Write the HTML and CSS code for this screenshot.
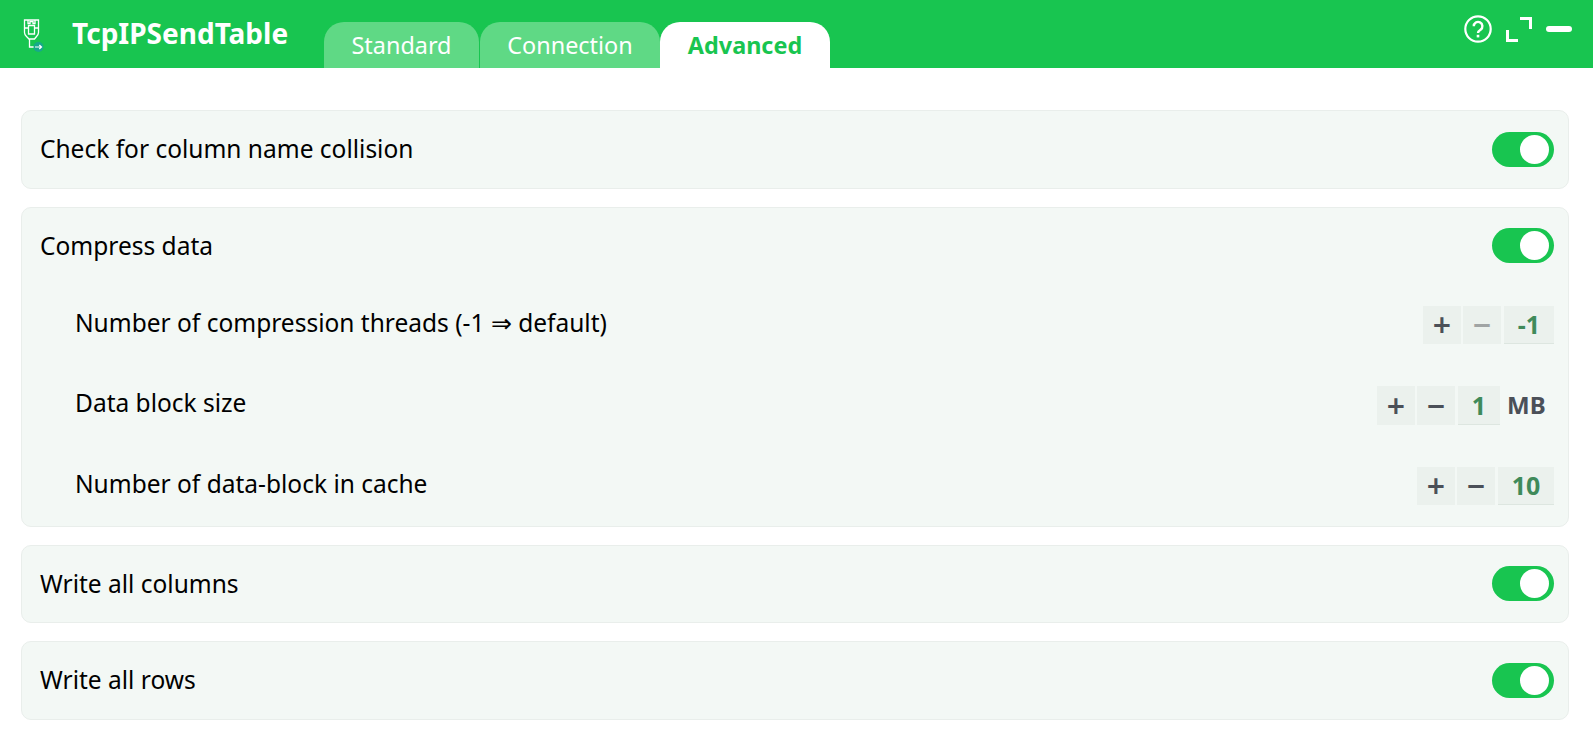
FILE: index.html
```html
<!DOCTYPE html>
<html lang="en">
<head>
<meta charset="utf-8">
<title>TcpIPSendTable</title>
<link rel="stylesheet" href="styles.css">
</head>
<body>
<header class="header">
  <svg class="logo" viewBox="0 0 26 36" width="26" height="36" fill="none" stroke="#fff" stroke-width="1.300">
    <path d="M4.500 3H18.500V15.500Q18.500 17.500 16.500 19.500L14.500 22H9L6.500 19.500Q4.500 17.500 4.500 15.500Z"/>
    <path d="M4.500 11H8.500M18.500 11H14.500"/>
    <path d="M8.500 8.500H14.500V17H8.500Z"/>
    <path d="M8 3V6.500H10V4.500H13V6.500H15V3"/>
    <path d="M9.500 22V30H14"/>
    <circle cx="18.500" cy="30" r="5" fill="#17a88c" stroke="none"/>
    <path d="M15 30H21.500M19.300 28L21.500 30L19.300 32" stroke-width="1.200"/>
  </svg>
  <div class="title">TcpIPSendTable</div>
  <nav class="tabs">
    <div class="tab tab-standard">Standard</div>
    <div class="tab tab-connection">Connection</div>
    <div class="tab tab-advanced">Advanced</div>
  </nav>
  <div class="actions">
    <svg width="28" height="28" viewBox="0 0 28 28" fill="none" stroke="#fff" stroke-width="2.200" class="act-help">
      <circle cx="14" cy="14" r="12.700"/>
      <path d="M9.800 11.300a4.300 4.300 0 1 1 6.800 3.400c-1.500 1-2.600 1.700-2.600 3.200" stroke-width="2.400"/>
      <path d="M14 19.800v2.600" stroke-width="2.600"/>
    </svg>
    <svg width="26" height="25" viewBox="0 0 26 25" fill="none" stroke="#fff" stroke-width="3" class="act-expand">
      <path d="M14 1.500H24.500V12"/>
      <path d="M1.500 13V23.500H12"/>
    </svg>
    <svg width="26" height="6" viewBox="0 0 26 6" class="act-min"><rect width="26" height="6" rx="3" fill="#fff"/></svg>
  </div>
</header>
<main class="main">
  <section class="card">
    <div class="row"><span class="label">Check for column name collision</span><span class="toggle"></span></div>
  </section>
  <section class="card card-group">
    <div class="row"><span class="label">Compress data</span><span class="toggle"></span></div>
    <div class="sub">
      <span class="label">Number of compression threads (-1 ⇒ default)</span>
      <div class="stepper"><span class="btn">+</span><span class="btn off">−</span><span class="val w-50">-1</span></div>
    </div>
    <div class="sub">
      <span class="label">Data block size</span>
      <div class="stepper"><span class="btn">+</span><span class="btn">−</span><span class="val w-42">1</span><span class="unit">MB</span></div>
    </div>
    <div class="sub">
      <span class="label">Number of data-block in cache</span>
      <div class="stepper"><span class="btn">+</span><span class="btn">−</span><span class="val w-56">10</span></div>
    </div>
  </section>
  <section class="card">
    <div class="row"><span class="label">Write all columns</span><span class="toggle"></span></div>
  </section>
  <section class="card">
    <div class="row"><span class="label">Write all rows</span><span class="toggle"></span></div>
  </section>
</main>
</body>
</html>
```
FILE: styles.css
```css
* { box-sizing: border-box; }
html, body { margin: 0; height: 100%; overflow: hidden; background: #fff; }
body { font-family: "Noto Sans", "Open Sans", sans-serif; color: #000; }

.header { height: 68px; background: #18c550; display: flex; align-items: flex-start; color: #fff; }
.logo { margin: 17px 0 0 20px; flex: none; }
.title { margin: 13px 0 0 26px; width: 252px; font-size: 28px; line-height: 40px; font-weight: 700; white-space: nowrap; }
.tabs { display: flex; margin-top: 22px; height: 46px; }
.tab { height: 46px; line-height: 46px; font-size: 23.4px; text-align: center; border-radius: 20px 20px 0 0; }
.tab-standard { width: 155px; background: #5fd985; }
.tab-connection { width: 180px; background: #5fd985; margin-left: 1px; }
.tab-advanced { width: 170px; background: #fff; color: #18c550; font-weight: 700; }
.actions { margin-left: auto; display: flex; align-items: flex-start; padding-right: 21px; }
.act-help { margin-top: 15px; }
.act-expand { margin: 17px 0 0 14px; }
.act-min { margin: 26px 0 0 14px; }

.main { padding: 42px 24px 0 21px; display: flex; flex-direction: column; gap: 18px; }
.card { background: #f3f8f5; border: 1px solid #e9eeeb; border-radius: 10px; padding: 0 14px 0 18px; }
.row { height: 76.6px; display: flex; align-items: center; justify-content: space-between; }
.card-group { height: 320px; }
.label { font-size: 24.5px; line-height: 34px; }
.toggle { width: 62px; height: 35px; border-radius: 18px; background: #18c550; position: relative; flex: none; }
.toggle::after { content: ""; position: absolute; top: 3px; right: 5px; width: 29px; height: 29px; border-radius: 50%; background: #fff; }
.sub { height: 80.5px; padding-left: 35px; display: flex; justify-content: space-between; align-items: flex-start; padding-top: 21.5px; }
.stepper { display: flex; gap: 2px; }
.btn, .val { height: 38.500px; background: #ebf1ed; display: flex; align-items: center; justify-content: center; font-size: 32px; font-weight: 600; color: #4b5058; }
.btn { width: 38px; }
.btn.off { color: #a0a4a4; }
.val { font-size: 25px; font-weight: 700; color: #3f8a5a; border-bottom: 1px solid #dde6e0; margin-left: 1px; }
.w-50 { width: 50px; }
.w-42 { width: 42px; }
.w-56 { width: 56px; }
.unit { font-size: 24px; font-weight: 700; color: #4b5058; line-height: 38px; margin-left: 5px; width: 47px; }
```
